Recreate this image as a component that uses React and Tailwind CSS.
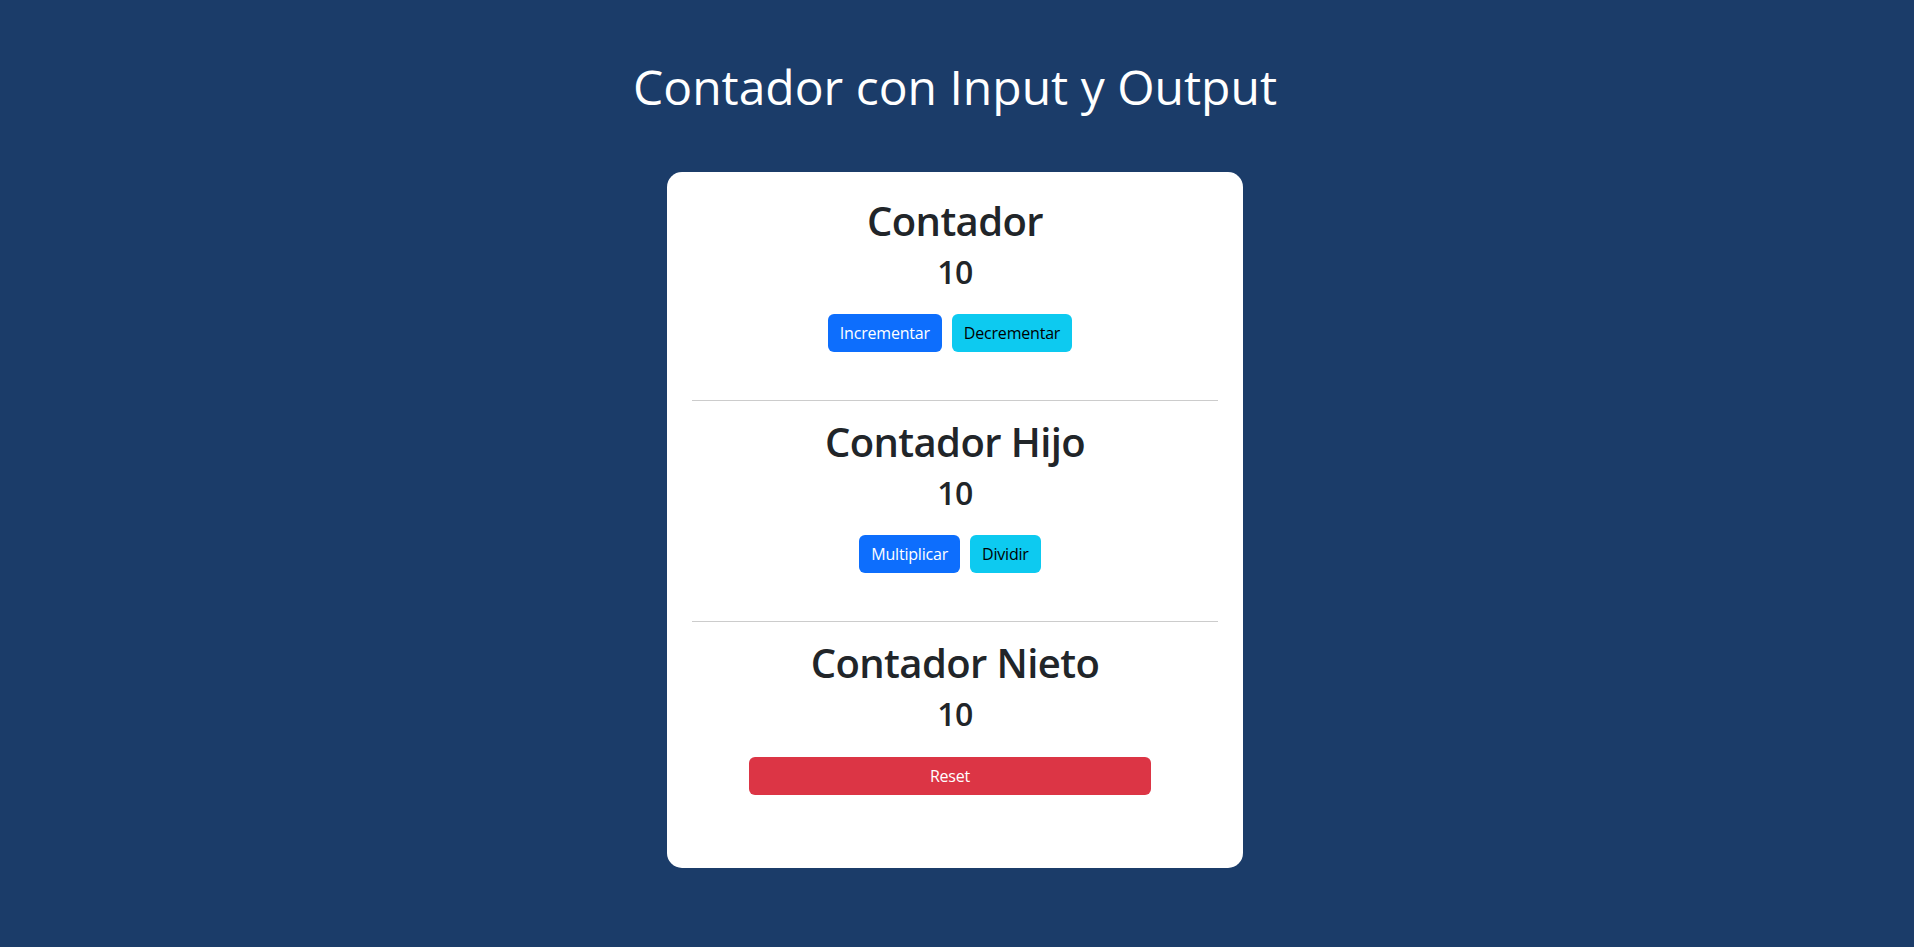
import React, { useState } from "react";

const font = { fontFamily: '"Open Sans", "Noto Sans", sans-serif' };

const Section = ({ title, value, children }) => (
  <div className="flex flex-col items-center">
    <h2 className="text-[40px] leading-[1.2] font-semibold tracking-[-0.6px] text-[#212529] mb-2">{title}</h2>
    <div className="text-[32px] leading-[1.2] font-semibold tracking-[-0.5px] text-[#212529]">{value}</div>
    <div className="mt-[23px] w-full">{children}</div>
  </div>
);

const Btn = ({ className, children, onClick }) => (
  <button
    onClick={onClick}
    className={`h-[38px] px-3 rounded-[6px] text-[16px] leading-[1.5] tracking-[-0.2px] ${className}`}
  >
    {children}
  </button>
);

export default function App() {
  const [count, setCount] = useState(10);

  return (
    <div className="min-h-screen bg-[#1b3c69] flex flex-col items-center pr-[4px]" style={font}>
      <h1 className="pt-[58px] text-[48px] leading-[1.2] font-normal text-white">Contador con Input y Output</h1>

      <div className="mt-[56px] w-[576px] bg-white rounded-[15px] px-[25px] pt-[25px] pb-[73px]">
        {/* Padre */}
        <Section title="Contador" value={count}>
          <div className="flex justify-center gap-[10px] pr-[10px]">
            <Btn className="bg-[#0d6efd] text-white" onClick={() => setCount(count + 1)}>Incrementar</Btn>
            <Btn className="bg-[#0dcaf0] text-black" onClick={() => setCount(count - 1)}>Decrementar</Btn>
          </div>
        </Section>

        <hr className="mt-[48px] mb-[17px] border-0 border-t border-[#cccccc]" />

        {/* Hijo */}
        <Section title="Contador Hijo" value={count}>
          <div className="flex justify-center gap-[10px] pr-[10px]">
            <Btn className="bg-[#0d6efd] text-white" onClick={() => setCount(count * 2)}>Multiplicar</Btn>
            <Btn className="bg-[#0dcaf0] text-black" onClick={() => setCount(count / 2)}>Dividir</Btn>
          </div>
        </Section>

        <hr className="mt-[48px] mb-[17px] border-0 border-t border-[#cccccc]" />

        {/* Nieto */}
        <Section title="Contador Nieto" value={count}>
          <div className="flex justify-center pr-[10px]">
            <Btn className="w-[402px] bg-[#dc3545] text-white" onClick={() => setCount(0)}>Reset</Btn>
          </div>
        </Section>
      </div>
    </div>
  );
}
